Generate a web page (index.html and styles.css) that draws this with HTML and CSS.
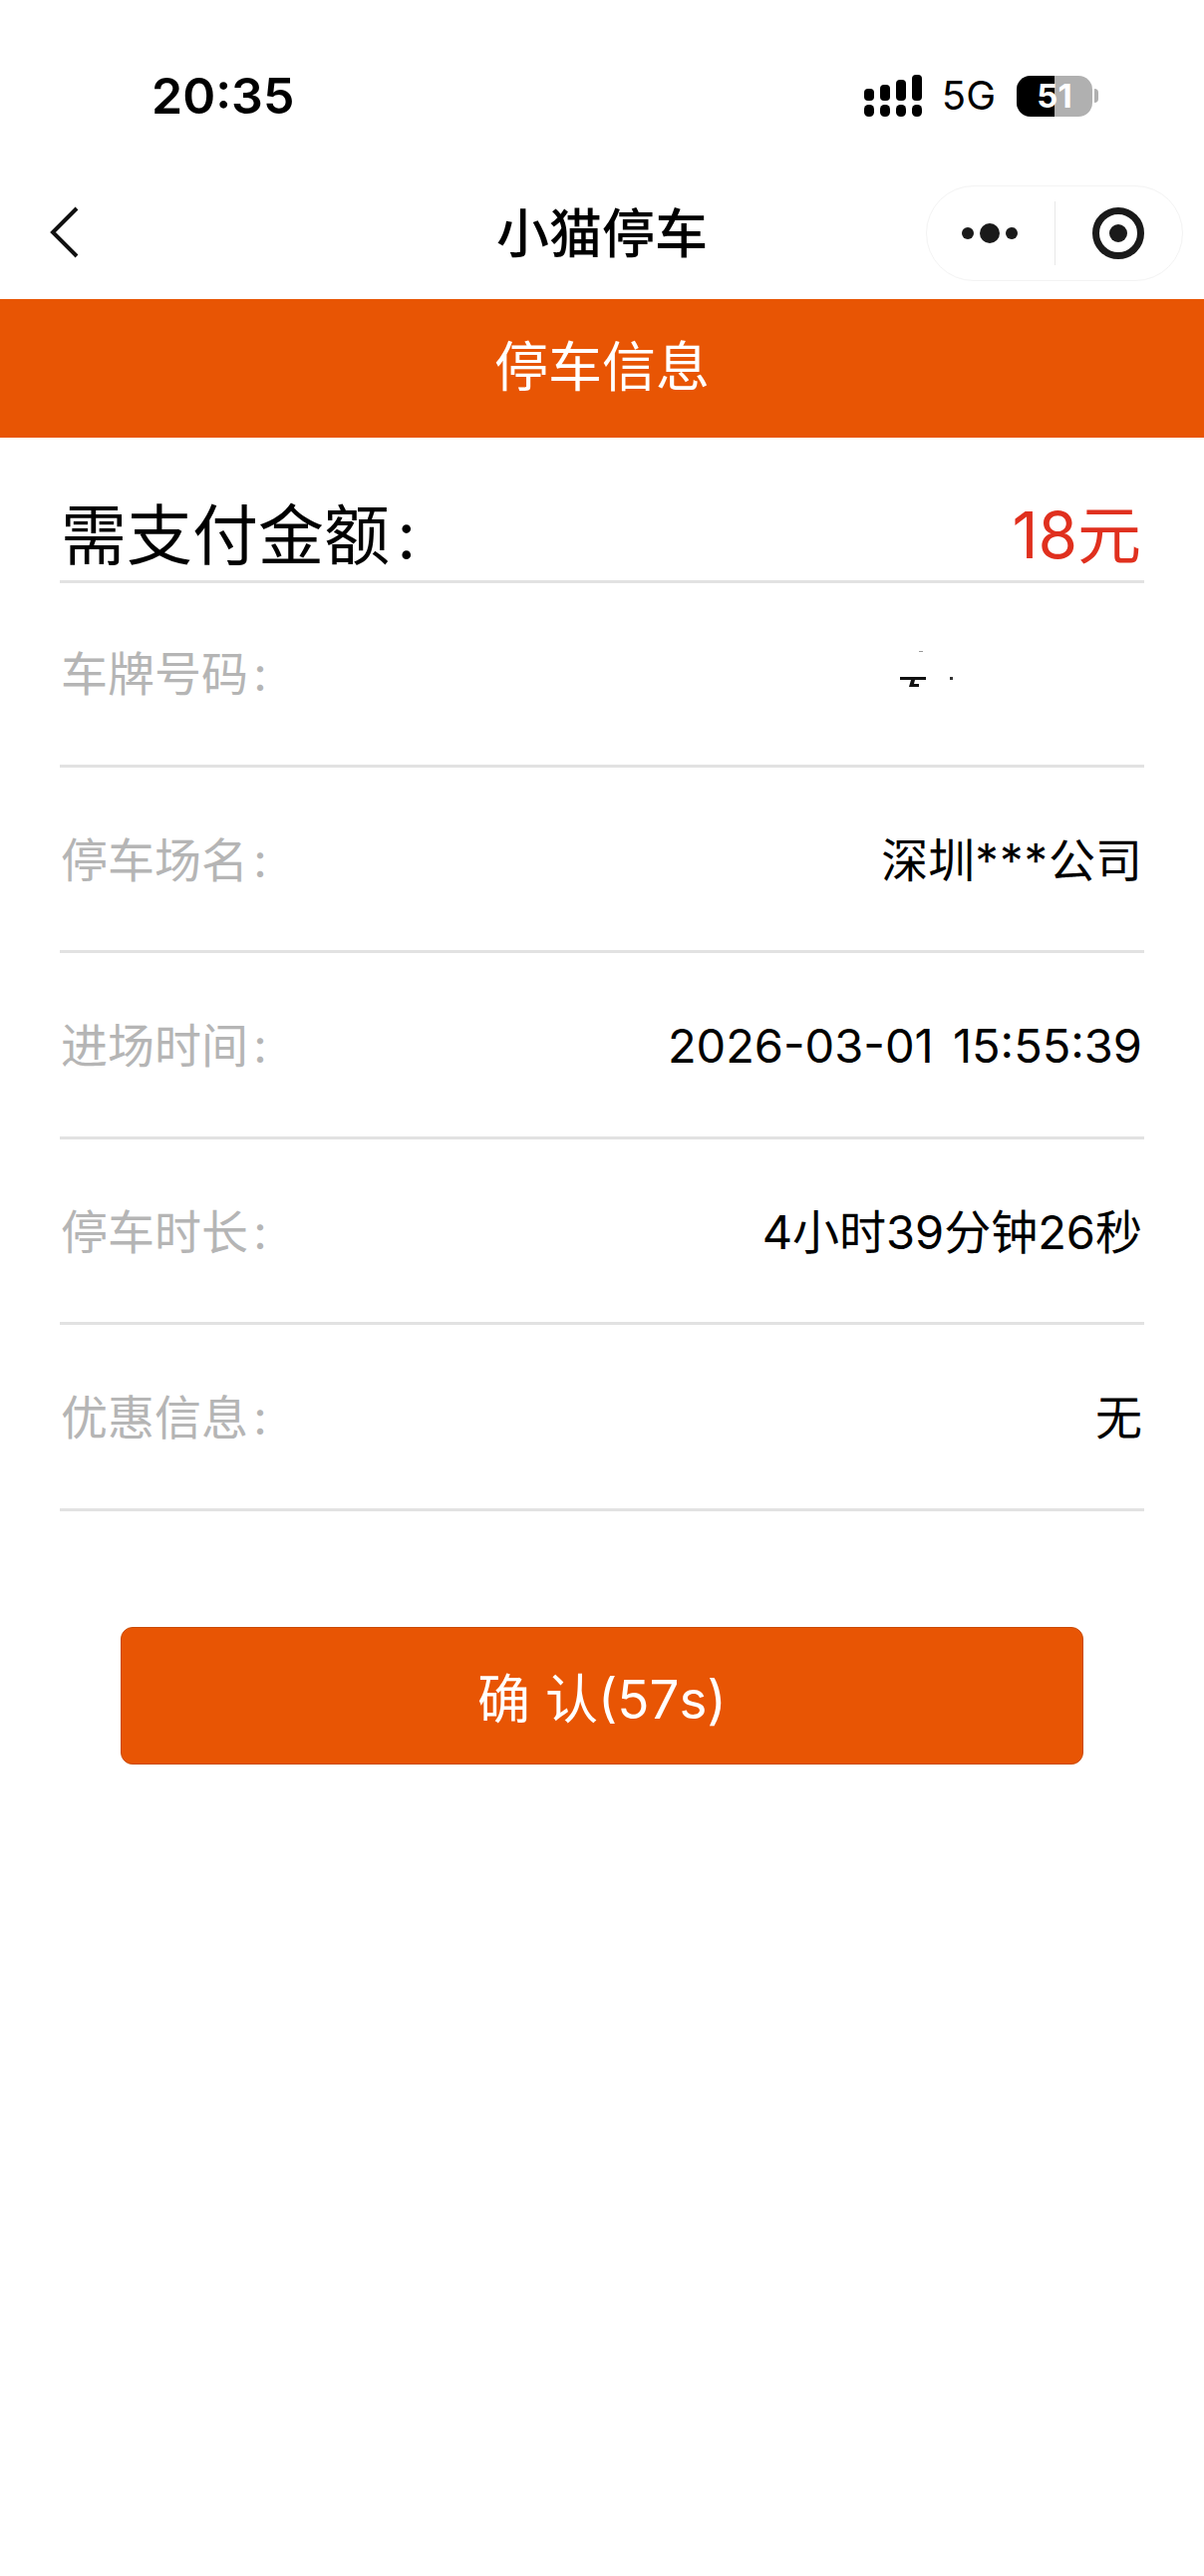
FILE: index.html
```html
<!DOCTYPE html>
<html lang="zh-CN">
<head>
    <meta charset="UTF-8">
    <meta name="viewport" content="width=device-width, initial-scale=1.0">
    <title>小猫停车</title>
    <link rel="stylesheet" href="styles.css">
</head>
<body>
    <div class="status-bar">
        <span class="clock">20:35</span>
        <div class="status-icons">
            <svg class="signal" width="58" height="42" viewBox="0 0 58 42">
                <rect x="0" y="14" width="10" height="12" rx="4"/>
                <rect x="16" y="10" width="10" height="16" rx="4"/>
                <rect x="32" y="5" width="10" height="21" rx="4"/>
                <rect x="48" y="0" width="10" height="26" rx="4"/>
                <rect x="0" y="30" width="10" height="12" rx="4.5"/>
                <rect x="16" y="30" width="10" height="12" rx="4.5"/>
                <rect x="32" y="30" width="10" height="12" rx="4.5"/>
                <rect x="48" y="30" width="10" height="12" rx="4.5"/>
            </svg>
            <span class="network">5G</span>
            <div class="battery">
                <div class="battery-fill"></div>
                <span class="battery-text">51</span>
            </div>
            <div class="battery-nub"></div>
        </div>
    </div>

    <div class="nav-bar">
        <svg class="back" width="32" height="54" viewBox="0 0 32 54">
            <path d="M28 3 L4 27 L28 51" fill="none" stroke="#111" stroke-width="4"/>
        </svg>
        <div class="nav-title">小猫停车</div>
        <div class="capsule">
            <div class="capsule-part">
                <svg width="60" height="20" viewBox="0 0 60 20">
                    <circle cx="7" cy="10" r="6" fill="#1a1a1a"/>
                    <circle cx="29" cy="10" r="10" fill="#1a1a1a"/>
                    <circle cx="51" cy="10" r="6" fill="#1a1a1a"/>
                </svg>
            </div>
            <div class="capsule-line"></div>
            <div class="capsule-part">
                <svg width="52" height="52" viewBox="0 0 52 52">
                    <circle cx="26" cy="26" r="22.5" fill="none" stroke="#1a1a1a" stroke-width="7"/>
                    <circle cx="26" cy="26" r="9" fill="#1a1a1a"/>
                </svg>
            </div>
        </div>
    </div>

    <div class="banner">停车信息</div>

    <div class="info">
        <div class="amount-row">
            <span>需支付金额<span class="colon">:</span></span>
            <span class="amount">18元</span>
        </div>
        <div class="row">
            <span class="label">车牌号码<span class="colon">:</span></span>
            <svg class="plate-mask" width="54" height="37" viewBox="0 0 54 37">
                <rect x="19" y="0" width="4" height="1" fill="#999"/>
                <path d="M0 26 H26 V29 H15 L14 33 H19 V36 H9 L11 29 H0 Z" fill="#111"/>
                <rect x="50" y="26" width="3" height="3" fill="#333"/>
            </svg>
        </div>
        <div class="row">
            <span class="label">停车场名<span class="colon">:</span></span>
            <span class="value">深圳<span class="stars">***</span>公司</span>
        </div>
        <div class="row">
            <span class="label">进场时间<span class="colon">:</span></span>
            <span class="value">2026-03-01 15:55:39</span>
        </div>
        <div class="row">
            <span class="label">停车时长<span class="colon">:</span></span>
            <span class="value">4小时39分钟26秒</span>
        </div>
        <div class="row">
            <span class="label">优惠信息<span class="colon">:</span></span>
            <span class="value">无</span>
        </div>
    </div>

    <button class="confirm-btn">确&nbsp;认(57s)</button>
</body>
</html>
```

FILE: styles.css
```css
body {
    margin: 0;
    background-color: #fff;
    color: #000;
    font-family: Inter, "Noto Sans CJK SC", sans-serif;
}

.status-bar {
    height: 186px;
    box-sizing: border-box;
    padding: 66px 106px 0 152px;
    display: flex;
    justify-content: space-between;
    align-items: flex-start;
}

.clock {
    font-size: 50px;
    font-weight: 600;
    line-height: 60px;
}

.status-icons {
    display: flex;
    align-items: center;
    margin-top: 9px;
}

.network {
    font-size: 40px;
    line-height: 42px;
    margin-left: 20px;
    margin-right: 21px;
}

.battery {
    width: 76px;
    height: 41px;
    border-radius: 14px;
    background-color: #b0b0b0;
    overflow: hidden;
    position: relative;
}

.battery-fill {
    width: 38px;
    height: 100%;
    background-color: #000;
}

.battery-text {
    position: absolute;
    left: 0;
    right: 0;
    top: 0;
    text-align: center;
    color: #fff;
    font-size: 33px;
    font-weight: bold;
    line-height: 41px;
}

.battery-nub {
    width: 4px;
    height: 14px;
    margin-left: 2px;
    background-color: #b0b0b0;
    border-radius: 0 4px 4px 0;
}

.nav-bar {
    height: 114px;
    display: flex;
    align-items: flex-start;
    justify-content: space-between;
    padding: 0 21px 0 49px;
    position: relative;
}

.back {
    margin-top: 20px;
}

.nav-title {
    position: absolute;
    left: 0;
    right: 0;
    top: 18px;
    text-align: center;
    font-size: 53px;
    font-weight: 500;
    line-height: 62px;
}

.capsule {
    width: 258px;
    height: 96px;
    box-sizing: border-box;
    border: 1px solid #f3f3f3;
    border-radius: 48px;
    display: flex;
    align-items: center;
}

.capsule-part {
    flex: 1;
    display: flex;
    justify-content: center;
    align-items: center;
}

.capsule-line {
    width: 1px;
    height: 64px;
    background-color: #e8e8e8;
}

.banner {
    height: 139px;
    background-color: #e85504;
    color: #fff;
    font-size: 54px;
    line-height: 138px;
    text-align: center;
}

.info {
    margin: 0 60px;
}

.amount-row {
    height: 146px;
    box-sizing: border-box;
    padding: 59px 3px 0 1px;
    border-bottom: 3px solid #e2e2e2;
    display: flex;
    justify-content: space-between;
    font-size: 66px;
    line-height: 78px;
}

.amount {
    color: #e0301e;
    font-size: 64px;
}

.colon {
    margin-left: 0.11em;
}

.row {
    height: 186.5px;
    box-sizing: border-box;
    padding: 65px 2px 0 1px;
    border-bottom: 3px solid #e2e2e2;
    display: flex;
    justify-content: space-between;
    font-size: 47px;
    line-height: 56px;
}

.amount-row + .row {
    height: 184.5px;
    padding-top: 63px;
}

.label {
    color: #b5b5b5;
}

.value {
    word-spacing: 6px;
}

.stars {
    letter-spacing: 1px;
}

.plate-mask {
    margin: 5px 189px 0 0;
}

.confirm-btn {
    display: block;
    width: 966px;
    height: 138px;
    margin: 116px 0 0 121px;
    border: 1px solid #c94a05;
    border-radius: 12px;
    background-color: #e85504;
    color: #fff;
    font-family: inherit;
    font-size: 53px;
}
```
